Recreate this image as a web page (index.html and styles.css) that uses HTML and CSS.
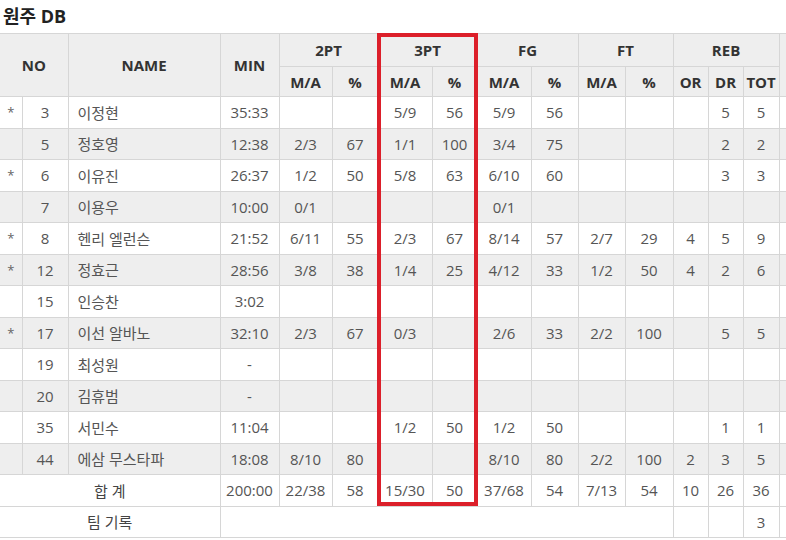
FILE: index.html
```html
<!DOCTYPE html>
<html lang="ko">
<head>
<meta charset="utf-8">
<title>원주 DB</title>
<link rel="stylesheet" href="styles.css">
</head>
<body>
<div class="page">
  <h2 class="team-title">원주 DB</h2>
  <div class="table-wrap">
    <table class="box">
      <colgroup>
        <col class="c-star"><col class="c-no"><col class="c-name"><col class="c-min">
        <col class="c-2ma"><col class="c-2p"><col class="c-3ma"><col class="c-3p">
        <col class="c-fma"><col class="c-fp"><col class="c-tma"><col class="c-tp">
        <col class="c-or"><col class="c-dr"><col class="c-tot"><col class="c-more">
      </colgroup>
      <thead>
        <tr class="hr1">
          <th colspan="2" rowspan="2">NO</th>
          <th rowspan="2">NAME</th>
          <th rowspan="2">MIN</th>
          <th colspan="2">2PT</th>
          <th colspan="2">3PT</th>
          <th colspan="2">FG</th>
          <th colspan="2">FT</th>
          <th colspan="3">REB</th>
          <th rowspan="2"></th>
        </tr>
        <tr class="hr2">
          <th>M/A</th><th>%</th>
          <th>M/A</th><th>%</th>
          <th>M/A</th><th>%</th>
          <th>M/A</th><th>%</th>
          <th>OR</th><th>DR</th><th>TOT</th>
        </tr>
      </thead>
      <tbody>
        <tr><td class="star">*</td><td>3</td><td class="name">이정현</td><td>35:33</td><td></td><td></td><td>5/9</td><td>56</td><td>5/9</td><td>56</td><td></td><td></td><td></td><td>5</td><td>5</td><td></td></tr>
        <tr class="alt"><td class="star"></td><td>5</td><td class="name">정호영</td><td>12:38</td><td>2/3</td><td>67</td><td>1/1</td><td>100</td><td>3/4</td><td>75</td><td></td><td></td><td></td><td>2</td><td>2</td><td></td></tr>
        <tr><td class="star">*</td><td>6</td><td class="name">이유진</td><td>26:37</td><td>1/2</td><td>50</td><td>5/8</td><td>63</td><td>6/10</td><td>60</td><td></td><td></td><td></td><td>3</td><td>3</td><td></td></tr>
        <tr class="alt"><td class="star"></td><td>7</td><td class="name">이용우</td><td>10:00</td><td>0/1</td><td></td><td></td><td></td><td>0/1</td><td></td><td></td><td></td><td></td><td></td><td></td><td></td></tr>
        <tr><td class="star">*</td><td>8</td><td class="name">헨리 엘런슨</td><td>21:52</td><td>6/11</td><td>55</td><td>2/3</td><td>67</td><td>8/14</td><td>57</td><td>2/7</td><td>29</td><td>4</td><td>5</td><td>9</td><td></td></tr>
        <tr class="alt"><td class="star">*</td><td>12</td><td class="name">정효근</td><td>28:56</td><td>3/8</td><td>38</td><td>1/4</td><td>25</td><td>4/12</td><td>33</td><td>1/2</td><td>50</td><td>4</td><td>2</td><td>6</td><td></td></tr>
        <tr><td class="star"></td><td>15</td><td class="name">인승찬</td><td>3:02</td><td></td><td></td><td></td><td></td><td></td><td></td><td></td><td></td><td></td><td></td><td></td><td></td></tr>
        <tr class="alt"><td class="star">*</td><td>17</td><td class="name">이선 알바노</td><td>32:10</td><td>2/3</td><td>67</td><td>0/3</td><td></td><td>2/6</td><td>33</td><td>2/2</td><td>100</td><td></td><td>5</td><td>5</td><td></td></tr>
        <tr><td class="star"></td><td>19</td><td class="name">최성원</td><td>-</td><td></td><td></td><td></td><td></td><td></td><td></td><td></td><td></td><td></td><td></td><td></td><td></td></tr>
        <tr class="alt"><td class="star"></td><td>20</td><td class="name">김휴범</td><td>-</td><td></td><td></td><td></td><td></td><td></td><td></td><td></td><td></td><td></td><td></td><td></td><td></td></tr>
        <tr><td class="star"></td><td>35</td><td class="name">서민수</td><td>11:04</td><td></td><td></td><td>1/2</td><td>50</td><td>1/2</td><td>50</td><td></td><td></td><td></td><td>1</td><td>1</td><td></td></tr>
        <tr class="alt"><td class="star"></td><td>44</td><td class="name">에삼 무스타파</td><td>18:08</td><td>8/10</td><td>80</td><td></td><td></td><td>8/10</td><td>80</td><td>2/2</td><td>100</td><td>2</td><td>3</td><td>5</td><td></td></tr>
        <tr><td colspan="3" class="label">합 계</td><td>200:00</td><td>22/38</td><td>58</td><td>15/30</td><td>50</td><td>37/68</td><td>54</td><td>7/13</td><td>54</td><td>10</td><td>26</td><td>36</td><td></td></tr>
        <tr><td colspan="3" class="label">팀 기록</td><td colspan="9"></td><td></td><td></td><td>3</td><td></td></tr>
      </tbody>
    </table>
    <div class="highlight"></div>
  </div>
</div>
</body>
</html>
```

FILE: styles.css
```css
html, body {
  margin: 0;
  padding: 0;
  background: #fff;
  overflow: hidden;
}

.page {
  width: 786px;
  height: 540px;
  overflow: hidden;
  font-family: "Open Sans", "Noto Sans CJK KR", sans-serif;
}

.team-title {
  margin: 0 0 0 3px;
  height: 33px;
  box-sizing: border-box;
  padding-top: 7px;
  font-family: "Open Sans", "Noto Sans CJK KR", sans-serif;
  font-size: 18px;
  line-height: 18px;
  font-weight: 700;
  color: #222;
}

.table-wrap {
  position: relative;
  width: 839px;
}

.box {
  border-collapse: collapse;
  table-layout: fixed;
  width: 839px;
  font-size: 15px;
  color: #555;
}

.c-star { width: 22px; }
.c-no { width: 46px; }
.c-name { width: 152px; }
.c-min { width: 59px; }
.c-2ma { width: 53px; }
.c-2p { width: 46px; }
.c-3ma { width: 54px; }
.c-3p { width: 45px; }
.c-fma { width: 54px; }
.c-fp { width: 47px; }
.c-tma { width: 47px; }
.c-tp { width: 48px; }
.c-or { width: 35px; }
.c-dr { width: 35px; }
.c-tot { width: 36px; }
.c-more { width: 60px; }

.box th,
.box td {
  border: 1px solid #d6d6d6;
  padding: 0;
  text-align: center;
  vertical-align: middle;
  white-space: nowrap;
  overflow: hidden;
}

.box tr > :first-child {
  border-left: none;
}

.box th {
  background: #eeeeee;
  color: #333;
  font-weight: 700;
  font-size: 15px;
}

.box .hr1 { height: 33px; }
.box .hr2 { height: 30px; }
.box tbody tr { height: 31.5px; }

.box tr.alt td { background: #eeeeee; }

.box td.name {
  text-align: left;
  padding-left: 9px;
}

.box td.star {
  font-size: 13px;
  color: #666;
}

.box td.label {
  color: #444;
}

.highlight {
  position: absolute;
  left: 377px;
  top: 0;
  width: 101px;
  height: 473px;
  box-sizing: border-box;
  border: 4px solid #dc1f2a;
  pointer-events: none;
}
```
